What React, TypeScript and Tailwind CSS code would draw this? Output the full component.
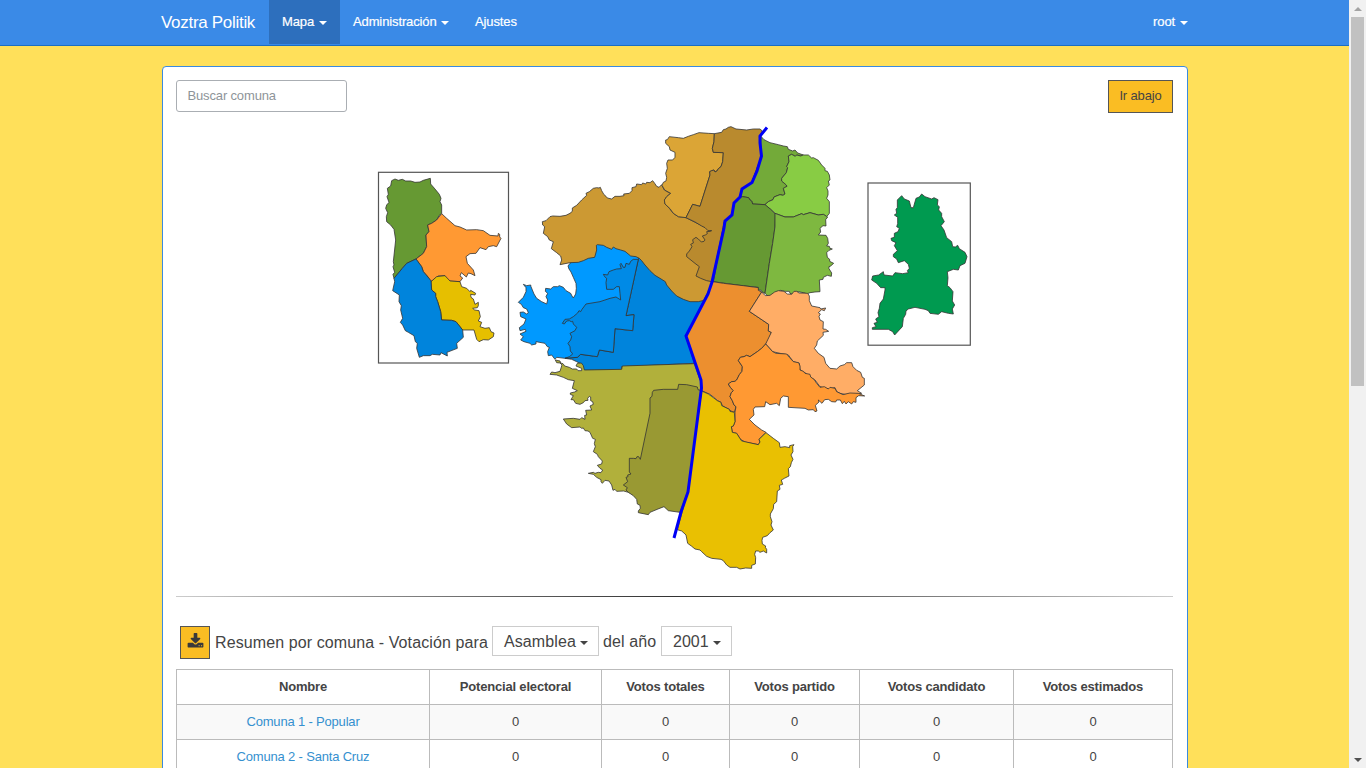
import React from "react";

const Caret = ({ className = "" }: { className?: string }) => (
  <svg viewBox="0 0 8 4" preserveAspectRatio="none" className={`inline-block h-1 w-2 shrink-0 fill-current ${className}`}>
    <path d="M0 0h8L4 4z" />
  </svg>
);

type Shape = { at: [number, number]; fill: string; pts: string };

// Points are in thirds of a pixel, relative to `at`.
const shapes: Shape[] = [
  { at: [510, 120], fill: "#0099ff", pts: "180,430 174,438 177,447 183,456 190,472 198,490 199,505 197,522 190,534 186,528 182,520 168,512 160,502 148,497 143,500 130,500 122,507 107,505 106,514 113,520 108,530 113,540 110,552 95,545 80,535 72,522 63,500 62,495 50,497 40,493 48,503 48,515 40,532 25,547 34,553 40,563 50,567 55,578 50,582 40,576 30,577 32,590 48,597 42,612 28,623 30,632 46,628 48,634 30,642 40,650 32,660 42,665 60,670 65,675 78,672 78,665 105,670 112,680 118,682 113,695 115,707 125,705 135,718 140,712 165,715 300,700 388,415 330,360 250,360" },
  { at: [510, 120], fill: "#0084dc", pts: "385,418 348,587 372,584 368,632 315,626 310,697 268,690 262,710 212,703 202,712 165,715 185,718 200,725 210,730 220,751 335,749 335,740 553,730 528,648 600,520 500,400 388,412" },
  { at: [510, 120], fill: "#008ae6", pts: "385,418 370,418 362,424 358,433 348,430 345,442 340,442 333,430 330,434 334,446 320,447 310,450 297,455 293,465 280,463 284,470 290,475 288,488 290,508 310,508 320,500 328,500 330,520 332,540 318,531 300,535 270,545 228,552 216,568 212,575 207,572 203,579 190,590 178,597 165,598 157,610 163,612 170,603 178,602 184,605 188,604 190,612 200,622 195,632 180,640 185,650 182,660 174,670 180,680 181,693 187,700 187,703 178,710 165,715 202,712 212,703 262,710 268,690 310,697 315,626 368,632 372,584 348,587" },
  { at: [510, 120], fill: "#cc9933", pts: "97,305 108,302 120,290 128,288 150,289 168,286 180,280 187,274 187,264 200,256 215,240 230,226 228,220 238,215 250,205 260,203 267,204 271,202 275,212 282,224 288,229 292,234 305,237 315,229 330,229 342,227 341,222 358,220 366,212 366,203 378,200 380,192 395,194 398,189 407,192 410,187 420,188 428,182 434,190 440,199 447,202 455,194 463,210 470,214 482,220 470,230 464,240 465,252 478,265 490,280 505,290 528,293 605,332 635,430 610,484 600,520 582,541 565,545 540,545 520,538 500,528 485,513 470,495 466,485 450,475 435,466 420,452 405,435 395,422 388,415 378,410 362,408 345,394 332,390 318,386 310,381 305,388 290,382 280,376 262,374 259,376 260,390 254,412 235,415 220,422 205,427 180,428 150,434 155,420 152,408 140,398 124,386 130,365 118,360 113,350 100,340 104,320 98,315" },
  { at: [650, 120], fill: "#dba536", pts: "193,41 175,40 147,38 130,44 115,49 100,55 85,53 58,50 52,59 47,60 47,70 58,80 60,90 75,97 75,112 68,120 54,120 50,130 52,145 47,160 50,172 48,183 40,187 36,196 44,210 62,220 50,230 43,240 45,252 60,266 70,280 85,290 108,293 128,253 150,259 180,165 179,155 185,152 192,150 195,156 201,153 205,146 213,140 218,125 220,98 190,97 187,85 192,65" },
  { at: [650, 120], fill: "#b98a2e", pts: "193,41 215,37 220,29 228,27 235,22 243,20 258,27 290,30 310,27 330,27 337,33 328,50 334,110 305,188 276,206 270,230 252,250 246,285 223,305 186,485 170,482 152,475 138,468 148,440 135,430 120,418 110,410 110,402 118,393 126,380 122,373 130,369 128,359 138,352 145,357 154,366 162,364 165,360 157,348 166,345 172,341 170,335 180,334 185,332 174,332 165,323 155,318 135,306 108,293 128,253 150,259 180,165 179,155 185,152 192,150 195,156 201,153 205,146 213,140 218,125 220,98 190,97 187,85 192,65" },
  { at: [650, 120], fill: "#73aa39", pts: "332,48 342,59 360,68 385,74 400,78 412,80 415,88 428,93 435,90 443,99 460,105 452,108 440,105 436,109 425,103 415,108 417,125 410,140 413,143 409,158 395,175 395,183 409,195 411,199 400,205 405,222 399,226 390,224 372,231 369,239 355,245 345,254 308,252 305,243 300,240 296,233 278,230 270,230 276,206 305,188 334,110" },
  { at: [650, 120], fill: "#88cc44", pts: "460,105 475,105 485,114 490,113 505,121 515,135 525,145 525,152 532,154 538,165 540,180 535,183 538,195 530,203 534,213 534,225 530,235 538,245 538,280 530,290 520,283 505,285 480,278 460,284 455,281 430,291 405,291 375,280 362,268 345,254 355,245 369,239 372,231 390,224 399,226 405,222 400,205 411,199 409,195 395,183 395,175 409,158 413,143 410,140 417,125 415,108 425,103 436,109 440,105 452,108" },
  { at: [650, 120], fill: "#669933", pts: "278,230 296,233 300,240 305,243 308,252 345,254 362,268 376,282 375,320 368,370 358,430 347,505 345,520 336,516 334,511 322,510 325,502 276,497 240,492 190,485 223,305 246,285 252,250 270,232" },
  { at: [650, 120], fill: "#7eb840", pts: "375,280 405,291 430,291 455,281 460,284 480,278 505,285 520,283 533,291 527,299 528,318 519,317 510,325 512,336 505,345 528,346 533,355 535,370 530,378 538,379 540,385 547,387 537,391 530,398 532,412 539,418 539,424 551,430 542,438 537,440 537,446 545,459 544,469 532,466 520,472 519,478 508,480 510,515 495,516 480,518 470,522 465,519 445,515 435,516 431,524 420,520 418,514 405,514 392,511 370,523 355,529 345,520 358,430 368,370 375,320" },
  { at: [670, 270], fill: "#ec8f2f", pts: "129,35 160,40 220,47 265,53 265,61 275,66 238,124 296,163 295,183 304,187 296,210 287,222 275,235 262,245 240,260 230,256 222,260 211,262 205,272 214,285 217,290 216,304 208,314 200,330 195,334 185,335 175,342 181,352 190,362 184,368 180,380 187,392 192,405 198,410 193,427 180,422 178,418 166,412 157,407 153,397 142,392 135,385 120,373 95,362 93,330 47,200 117,60" },
  { at: [670, 270], fill: "#ffad66", pts: "275,66 286,77 300,76 314,66 325,62 342,64 352,72 365,73 372,64 380,64 387,69 413,70 418,78 418,92 425,108 450,113 452,117 467,114 463,122 455,119 445,128 451,132 447,139 450,150 460,155 459,177 467,178 476,184 459,187 460,196 442,213 440,225 433,235 445,250 462,262 467,280 480,295 500,297 510,288 523,284 530,278 545,278 549,290 560,301 572,307 577,322 583,325 583,345 562,362 575,370 555,373 525,373 510,370 500,365 495,353 475,357 450,350 435,330 420,322 405,308 390,300 388,280 370,275 355,255 330,250 308,245 287,222 304,187 295,183 296,163 238,124" },
  { at: [670, 270], fill: "#ff9933", pts: "287,222 308,245 318,250 350,252 358,262 370,275 386,278 390,288 390,300 400,304 405,310 420,313 422,321 432,328 440,340 450,352 463,350 475,357 480,352 495,355 500,365 519,374 540,369 565,370 584,378 566,377 558,383 558,397 550,395 545,402 535,395 528,402 523,394 517,401 511,390 500,390 497,396 485,395 475,388 464,389 456,400 445,390 447,396 436,406 441,423 435,425 430,419 415,420 405,415 355,412 355,380 340,378 332,385 328,407 320,400 300,404 287,395 284,410 255,411 250,418 252,435 238,448 255,465 275,480 288,487 267,508 270,516 265,524 225,516 210,507 207,501 200,490 187,487 184,470 190,468 195,455 195,427 198,410 192,405 187,392 180,380 184,368 190,362 181,352 175,342 185,335 195,334 200,330 208,314 216,304 217,290 214,285 205,272 211,262 222,260 230,256 240,260 262,245 275,235" },
  { at: [660, 370], fill: "#e9c002", pts: "125,63 145,72 160,83 172,92 183,97 185,107 208,118 210,124 223,127 225,155 220,168 214,170 217,187 230,190 237,201 245,213 295,224 300,216 297,208 318,188 340,205 358,218 360,232 375,230 389,233 389,227 402,224 398,230 399,245 393,255 399,268 394,278 391,290 385,296 387,318 373,325 368,328 364,330 368,343 358,346 360,358 352,363 350,395 341,403 340,416 331,432 331,440 336,455 333,465 340,480 330,488 322,497 308,502 306,511 307,522 317,528 316,532 320,538 320,549 310,543 300,547 295,543 287,543 284,553 287,563 286,582 275,586 275,595 257,594 240,597 230,592 210,592 200,585 190,572 183,568 155,565 140,559 125,545 120,540 105,537 94,528 83,520 78,495 75,492 65,483 52,479 83,365 120,100" },
  { at: [540, 350], fill: "#b1b03b", pts: "30,73 35,66 45,68 60,64 66,45 60,39 50,38 46,30 60,33 62,39 69,41 74,48 88,52 97,57 110,57 114,62 125,62 125,55 108,48 112,40 124,39 130,47 133,60 245,58 247,48 463,41 482,95 484,122 440,430 330,450 265,427 251,423 230,424 225,418 219,421 215,405 207,393 195,391 187,400 183,395 183,389 170,382 160,373 145,370 160,367 165,370 175,367 183,368 188,360 180,355 172,346 185,342 187,333 175,320 172,313 160,305 166,290 163,281 166,268 158,265 150,247 144,243 135,242 130,234 125,235 120,231 95,233 80,222 70,207 100,205 120,208 125,203 135,208 134,196 140,195 137,181 155,180 150,168 160,163 158,155 152,152 152,141 148,139 143,145 144,151 135,152 130,158 120,163 107,160 100,149 93,149 100,137 91,133 91,129 104,126 112,122 97,115 103,92 85,89 70,82 50,75" },
  { at: [540, 350], fill: "#999933", pts: "341,121 370,118 413,118 416,103 440,104 472,111 474,119 484,122 443,425 420,487 385,482 372,470 354,477 330,487 325,494 295,488 295,483 301,475 300,466 292,462 290,448 280,437 265,427 258,420 262,413 250,405 263,395 258,382 264,380 263,375 273,372 268,366 268,325 280,325 288,326 291,320 296,320 301,328 330,190 330,144 336,139 337,127" },
  { at: [370, 165], fill: "#669933", pts: "65,47 75,42 85,46 97,43 107,48 122,48 135,52 150,51 160,46 181,40 182,57 195,72 208,88 213,100 210,110 215,120 215,145 207,152 200,165 185,175 173,180 177,200 168,210 170,245 160,265 138,282 110,295 97,310 72,340 69,328 74,322 69,305 72,300 70,290 77,225 72,193 62,180 50,170 49,155 53,143 47,130 50,120 57,112 51,95 55,88 52,70 62,63" },
  { at: [370, 165], fill: "#ff9933", pts: "215,146 230,160 255,182 270,186 290,195 320,194 340,197 360,211 384,213 385,205 389,208 389,216 393,220 380,245 370,242 355,245 348,254 330,248 318,265 300,266 288,275 292,295 310,315 315,332 303,326 295,324 289,336 274,323 270,333 278,339 270,350 235,348 225,332 205,333 183,350 172,333 160,320 155,305 138,282 160,265 170,245 168,210 177,200 173,180 185,175 200,165" },
  { at: [370, 165], fill: "#e6bf00", pts: "183,350 200,335 225,332 240,348 270,350 275,365 290,370 300,380 302,376 317,385 315,390 302,388 303,397 310,402 315,418 325,412 325,422 322,428 308,430 314,435 327,437 331,455 325,468 335,472 330,485 345,490 358,488 363,500 372,504 370,515 355,525 340,524 327,530 320,523 312,495 278,495 258,470 245,466 215,465 212,440 203,410 197,395 197,385 185,375" },
  { at: [370, 165], fill: "#0084dc", pts: "138,282 110,295 97,310 72,340 74,350 68,377 88,390 87,410 94,422 92,435 98,460 91,472 98,480 106,497 115,502 132,512 136,530 142,535 140,550 148,577 160,572 180,572 187,568 210,570 213,563 232,573 231,562 262,550 260,535 280,517 278,495 258,470 245,466 215,465 212,440 203,410 197,395 197,385 185,375 183,347 160,320 155,305" },
  { at: [860, 175], fill: "#009a50", pts: "125,62 133,72 148,78 153,98 160,98 168,70 178,66 185,57 195,65 215,72 222,68 234,74 232,90 238,95 236,105 245,115 245,125 253,140 243,152 252,165 260,188 275,200 278,215 286,216 293,211 298,221 315,232 321,245 315,265 300,272 295,285 280,283 262,290 264,308 262,332 270,338 279,350 277,378 284,390 277,402 280,417 265,415 245,410 235,418 210,415 205,407 195,403 165,397 145,402 138,408 137,418 130,430 127,455 104,480 98,470 85,463 37,463 37,458 48,455 42,445 52,442 47,432 57,425 54,413 58,400 60,385 70,372 75,345 75,338 62,338 50,325 35,315 38,303 56,300 70,290 72,300 98,303 105,293 128,296 145,293 142,287 148,280 145,268 133,257 115,263 110,252 100,245 100,238 112,227 103,212 108,203 95,197 93,190 103,187 103,175 114,170 118,160 110,155 113,146 113,127 103,120 110,115 108,103 112,98 112,75" },
];

const Map = () => (
  <svg viewBox="176 113 997 483" className="block h-[483px] w-full">
    <g fill="#fff" stroke="#555" strokeWidth="1.2">
      <rect x="378.5" y="172.3" width="130" height="190.7" />
      <rect x="868" y="183" width="102.3" height="162.2" />
    </g>
    {shapes.map((s, i) => (
      <g key={i} transform={`translate(${s.at[0]} ${s.at[1]}) scale(.33333)`}>
        <polygon points={s.pts} fill={s.fill} stroke="#333" strokeOpacity=".8" strokeWidth="3" strokeLinejoin="round" />
      </g>
    ))}
    <polyline
      points="767,127.5 760,136 760,143 761.5,156 757,171 752,182.5 742,189 740,197 734,203 732,215 725,221 724,228 712,282 708,294 686,336 701,380 701.5,388 688,492 681,512 674,538"
      fill="none"
      stroke="#0000f5"
      strokeWidth="3"
    />
  </svg>
);

const columns = [
  { label: "Nombre", width: "w-[253px]" },
  { label: "Potencial electoral", width: "w-[172px]" },
  { label: "Votos totales", width: "w-[128px]" },
  { label: "Votos partido", width: "w-[130px]" },
  { label: "Votos candidato", width: "w-[154px]" },
  { label: "Votos estimados", width: "w-[159px]" },
];

const rows = ["Comuna 1 - Popular", "Comuna 2 - Santa Cruz"];

export default function App() {
  return (
    <div className="flex h-screen overflow-hidden bg-[#ffe05a] font-['Liberation_Sans',Arial,sans-serif] text-[13px] text-[#444]">
      <div className="flex min-w-0 flex-1 flex-col">
        <header className="h-[46px] shrink-0 border-b border-[#1b6ec2] bg-[#3a8ae7] pr-[161px] pl-[161px] text-white">
          <nav className="flex h-11 items-center tracking-[-0.12px]">
            <a className="w-[108px] pt-px text-[17px] tracking-[-0.3px] whitespace-nowrap">Voztra Politik</a>
            <a className="flex h-11 w-[71px] items-center bg-[#2d6fbd] pl-[13px] [-webkit-text-stroke:0.2px]">
              Mapa <Caret className="mt-0.5 ml-[5px]" />
            </a>
            <a className="flex w-[122px] items-center pl-[13px] [-webkit-text-stroke:0.2px]">
              Administración <Caret className="mt-0.5 ml-1" />
            </a>
            <a className="pl-[13px] [-webkit-text-stroke:0.2px]">Ajustes</a>
            <a className="ml-auto flex items-center [-webkit-text-stroke:0.2px]">
              root <Caret className="mt-0.5 ml-[5px]" />
            </a>
          </nav>
        </header>
        <main className="mt-5 ml-[162px] h-[800px] w-[1026px] shrink-0 rounded border border-[#3a8ae0] bg-white pt-[13px] pr-[14px] pl-[13px]">
          <div className="flex h-[33px] items-start justify-between">
            <input
              placeholder="Buscar comuna"
              className="h-8 w-[171px] rounded-[3px] border border-[#aaaeb3] pb-0.5 pl-[10.5px] text-[13px] tracking-[-0.15px] placeholder:text-[#8e9499]"
            />
            <button className="h-[33px] w-[65px] border border-[#555] bg-[#fabd23] pb-px tracking-[-0.15px]">Ir abajo</button>
          </div>
          <Map />
          <div className="h-px bg-linear-to-r from-[#ccc] via-[#333] to-[#ccc]" />
          <div className="mt-[29px] flex h-[33px] items-start pl-1 text-base">
            <button className="flex h-[33px] w-[30px] items-center justify-center border border-[#555] bg-[#fabd23]">
              <svg viewBox="0 0 1792 1792" className="mb-0.5 h-[17px] w-[17px] fill-[#3a3a3a]">
                <path d="M1344 1344q0-26-19-45t-45-19-45 19-19 45 19 45 45 19 45-19 19-45zm256 0q0-26-19-45t-45-19-45 19-19 45 19 45 45 19 45-19 19-45zm128-224v320q0 40-28 68t-68 28h-1472q-40 0-68-28t-28-68v-320q0-40 28-68t68-28h465l135 136q58 56 136 56t136-56l136-136h464q40 0 68 28t28 68zm-325-569q17 41-14 70l-448 448q-18 19-45 19t-45-19l-448-448q-31-29-14-70 17-39 59-39h256v-448q0-26 19-45t45-19h256q26 0 45 19t19 45v448h256q42 0 59 39z" />
              </svg>
            </button>
            <span className="mt-[5px] ml-[5px] w-[277px] tracking-[0.1px] whitespace-nowrap">Resumen por comuna - Votación para</span>
            <button className="flex h-[30px] w-[107px] items-center border border-[#ccc] pt-0.5 pl-[11px]">
              <span className="tracking-[0.1px]">Asamblea</span> <Caret className="mt-0.5 ml-1" />
            </button>
            <span className="mt-1 ml-1 w-[58px] tracking-[0.1px] whitespace-nowrap">del año</span>
            <button className="flex h-[30px] w-[71px] items-center border border-[#ccc] pt-0.5 pl-[11px]">
              2001 <Caret className="mt-0.5 ml-1" />
            </button>
          </div>
          <table className="mt-[10px] w-[997px] table-fixed border-collapse text-center tracking-[-0.18px]">
            <thead>
              <tr className="h-[35px]">
                {columns.map((c) => (
                  <th key={c.label} className={`border border-[#bbb] ${c.width}`}>
                    {c.label}
                  </th>
                ))}
              </tr>
            </thead>
            <tbody>
              {rows.map((name) => (
                <tr key={name} className="h-[35px] odd:bg-[#f9f9f9]">
                  <td className="border border-[#bbb] text-[#3590cf]">{name}</td>
                  {columns.slice(1).map((c) => (
                    <td key={c.label} className="border border-[#bbb]">
                      0
                    </td>
                  ))}
                </tr>
              ))}
            </tbody>
          </table>
        </main>
      </div>
      <div className="flex w-[17px] flex-col items-center justify-between bg-[#f1f1f1]">
        <div className="flex flex-col items-center">
          <div className="flex h-[17px] items-center">
            <svg viewBox="0 0 8 4" preserveAspectRatio="none" className="h-1 w-2 fill-[#a3a3a3]">
              <path d="M0 4h8L4 0z" />
            </svg>
          </div>
          <div className="h-[369px] w-[13px] bg-[#c1c1c1]" />
        </div>
        <div className="flex h-[17px] items-center">
          <Caret className="text-[#505050]" />
        </div>
      </div>
    </div>
  );
}
